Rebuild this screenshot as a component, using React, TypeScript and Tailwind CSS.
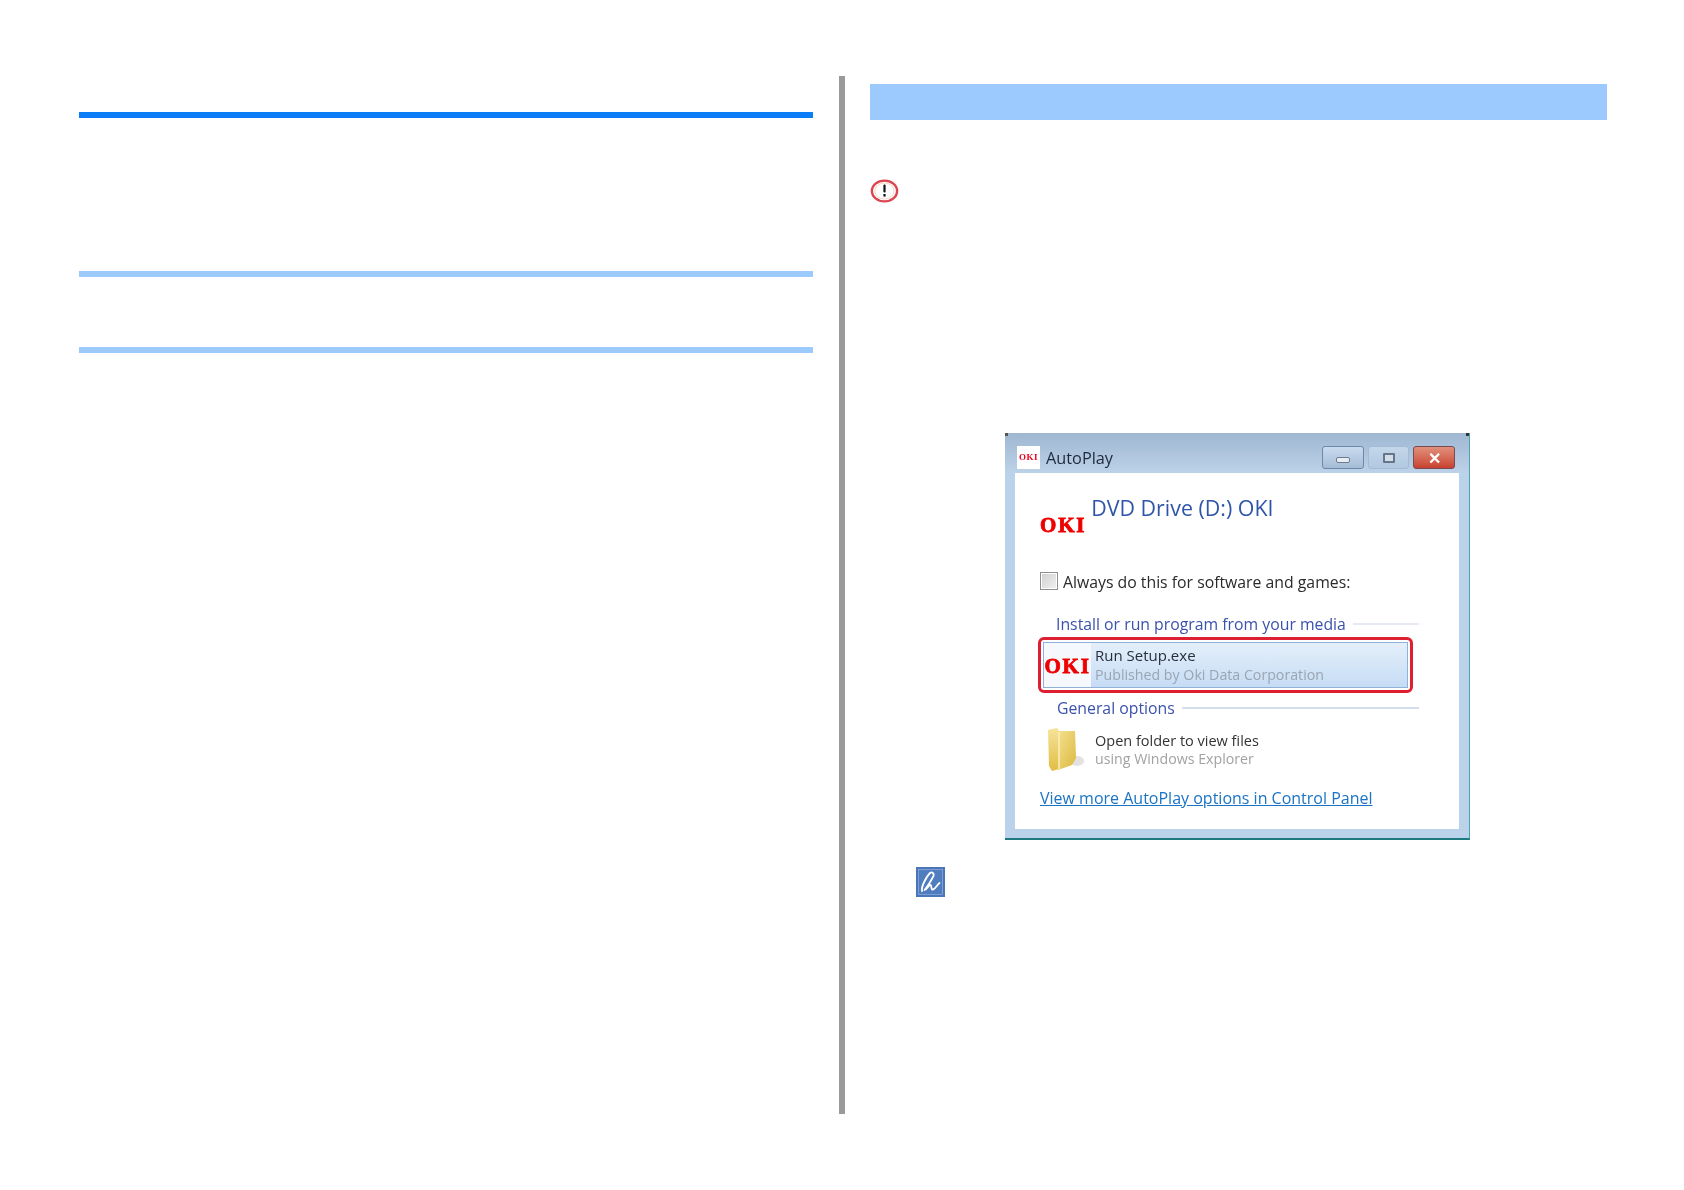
import React from 'react'

const ui = "font-['Open_Sans',sans-serif]"

const OkiLogo = ({ className = '' }: { className?: string }) => (
  <span className={`font-['Liberation_Serif',serif] font-bold text-[21px] leading-[14px] tracking-[1.8px] text-[#ee0000] [-webkit-text-stroke:0.8px_#ee0000] ${className}`}>OKI</span>
)

const WarningIcon = () => (
  <svg width="29" height="24" viewBox="0 0 29 24" className="block blur-[0.4px]">
    <ellipse cx="14.5" cy="12" rx="12.6" ry="10.4" fill="#fff" stroke="#dc4650" strokeWidth="2.4" />
    <ellipse cx="14.5" cy="12" rx="9.6" ry="8" fill="none" stroke="#f6d9c8" strokeWidth="1" />
    <rect x="13.4" y="5.5" width="2.2" height="8" rx="1" fill="#111" />
    <rect x="13.4" y="15" width="2.2" height="2.6" fill="#111" />
  </svg>
)

const NoteIcon = () => (
  <svg width="29" height="30" viewBox="0 0 29 30" className="block blur-[0.4px]">
    <rect width="29" height="30" fill="#4a76b8" />
    <rect x="2.5" y="2.5" width="24" height="25" fill="#4f7dbf" stroke="#93b0da" strokeWidth="0.7" />
    <path d="M6 24 C5 19 11 9 14 6 C16 4.5 18.5 6.5 17.5 9 C15.5 13 12 19 8.5 23 C12 22 12.5 18 14.5 18 C16 18 14.5 23 17 22.5 C19.5 22 21 18 23.5 16" fill="none" stroke="#fff" strokeWidth="1.8" strokeLinecap="round" strokeLinejoin="round" />
  </svg>
)

const FolderIcon = () => (
  <svg width="37" height="44" viewBox="0 0 37 44" className="block">
    <defs>
      <linearGradient id="fold" x1="0" y1="0" x2="1" y2="1">
        <stop offset="0" stopColor="#f4e08e" />
        <stop offset="1" stopColor="#dcb83f" />
      </linearGradient>
      <linearGradient id="foldBack" x1="0" y1="0" x2="0" y2="1">
        <stop offset="0" stopColor="#f6e39a" />
        <stop offset="1" stopColor="#e2bd45" />
      </linearGradient>
    </defs>
    <ellipse cx="29" cy="33" rx="7" ry="5" fill="#cfcfcf" opacity="0.6" />
    <path d="M0 2 L9 0 L11 3 L11 41 L4 43 L1 38 Z" fill="url(#foldBack)" />
    <path d="M10 3 L27 3 L28 30 L24 37 L10 42 Z" fill="url(#fold)" />
    <path d="M11 4 L11 41" stroke="#fbeeb4" strokeWidth="1.5" />
  </svg>
)

const SectionHead = ({ label, lineClass }: { label: string; lineClass: string }) => (
  <div className="flex items-center gap-[7px] h-5">
    <span className="text-[15.8px] leading-5 text-[#3b52ad] whitespace-nowrap">{label}</span>
    <span className={`flex-1 h-[2px] ${lineClass}`}></span>
  </div>
)

const AutoPlayDialog = () => (
  <div className={`relative w-[465px] h-[407px] flex flex-col border-b-2 border-r border-b-[#1f7a7f] border-r-[#4aa3b5] bg-[#bad2ea] px-[10px] pb-[9px] blur-[0.6px] ${ui}`}>
    <span className="absolute left-0 top-0 w-[3px] h-[3px] bg-[#555]"></span>
    <span className="absolute right-0 top-0 w-[3px] h-[3px] bg-[#333]"></span>
    <div className="h-10 shrink-0 -mx-[10px] pl-3 pr-[14px] pt-[13px] flex items-start bg-gradient-to-b from-[#9fb7d2] to-[#bcd2e8]">
      <div className="w-[23px] h-[23px] bg-white flex items-center justify-center overflow-hidden">
        <span className="font-['Liberation_Serif',serif] font-bold text-[9px] tracking-[0.5px] text-[#e8001c]">OKI</span>
      </div>
      <span className="ml-[6px] text-[16.3px] leading-[24px] text-[#1e2a3c]">AutoPlay</span>
      <div className="ml-auto flex gap-[4px]">
        <div className="w-[42px] h-[23px] rounded-[3px] border border-[#6f88a8] bg-gradient-to-b from-[#c9dcef] to-[#a5bcd6] flex items-center justify-center">
          <span className="w-[14px] h-[6px] mt-1 rounded-[2px] border border-[#6b7a8c] bg-[#e8edf3]"></span>
        </div>
        <div className="w-[41px] h-[23px] rounded-[3px] border border-[#a5bbd4] bg-gradient-to-b from-[#c4d7ea] to-[#b1c8e0] flex items-center justify-center">
          <span className="w-[12px] h-[10px] rounded-[1px] border-2 border-[#667589] bg-[#d4dee9]"></span>
        </div>
        <div className="w-[42px] h-[23px] rounded-[3px] border border-[#7a4a52] bg-gradient-to-b from-[#e0907c] to-[#c8402f] flex items-center justify-center">
          <span className="text-white font-bold text-[16px] leading-none">✕</span>
        </div>
      </div>
    </div>
    <div className="flex-1 bg-white pl-[25px] pr-10 flex flex-col">
      <div className="flex mt-5 h-[79px] shrink-0 items-start">
        <OkiLogo className="mt-[25px]" />
        <span className="ml-[5px] text-[21.4px] leading-[30px] text-[#2f55a8] whitespace-nowrap">DVD Drive (D:) OKI</span>
      </div>
      <div className="flex items-center gap-[5px] h-[18px] shrink-0">
        <span className="w-[18px] h-[18px] border border-[#8e8f8f] bg-gradient-to-br from-[#cfcfcf] to-[#f2f2f2] shadow-[inset_0_0_0_1px_#fff]"></span>
        <span className="text-[15.8px] leading-5 pt-[1px] text-[#2a2a2a] whitespace-nowrap">Always do this for software and games:</span>
      </div>
      <div className="mt-6 ml-4 shrink-0">
        <SectionHead label="Install or run program from your media" lineClass="bg-[#e6ebf3]" />
      </div>
      <div className="mt-[3px] -ml-[2px] mr-[6px] h-[56px] shrink-0 rounded-[6px] border-[3px] border-[#de1f32] p-[2px]">
        <div className="h-full flex border border-[#8fb2d8] bg-gradient-to-b from-[#e4effa] to-[#c6dcf5]">
          <div className="w-[47px] bg-[#f5f9fd] flex items-center justify-center"><OkiLogo className="mt-[1px]" /></div>
          <div className="ml-[4px] flex flex-col justify-center">
            <span className="text-[15px] leading-[18px] text-[#26303c]">Run Setup.exe</span>
            <span className="text-[14.2px] leading-[18px] text-[#9aa5b2] mt-[2px]">Published by Oki Data Corporation</span>
          </div>
        </div>
      </div>
      <div className="mt-[5px] ml-[17px] shrink-0">
        <SectionHead label="General options" lineClass="bg-[#d5deec]" />
      </div>
      <div className="mt-[8px] ml-2 flex shrink-0 h-[47px] items-center">
        <FolderIcon />
        <div className="ml-[10px] flex flex-col leading-[18px]">
          <span className="text-[14.5px] text-[#333]">Open folder to view files</span>
          <span className="text-[14.2px] text-[#a2a2a2]">using Windows Explorer</span>
        </div>
      </div>
      <a className="mt-[15px] text-[16px] leading-5 text-[#1a73c4] underline whitespace-nowrap">View more AutoPlay options in Control Panel</a>
    </div>
  </div>
)

export default function App() {
  return (
    <div className="w-[1684px] h-[1190px] bg-white flex items-start pt-[76px]">
      <div className="ml-[79px] w-[734px] pt-[36px] flex flex-col">
        <div className="h-[6px] bg-[#0a7df7]"></div>
        <div className="mt-[153px] h-[6px] bg-[#9ccaff]"></div>
        <div className="mt-[70px] h-[6px] bg-[#9ccaff]"></div>
      </div>
      <div className="ml-[26px] w-[6px] h-[1038px] bg-[#9a9a9a]"></div>
      <div className="ml-[25px] w-[737px] pt-[8px] flex flex-col">
        <div className="h-9 bg-[#9ccaff]"></div>
        <div className="mt-[59px]"><WarningIcon /></div>
        <div className="mt-[230px] ml-[135px]"><AutoPlayDialog /></div>
        <div className="mt-[27px] ml-[46px]"><NoteIcon /></div>
      </div>
    </div>
  )
}
